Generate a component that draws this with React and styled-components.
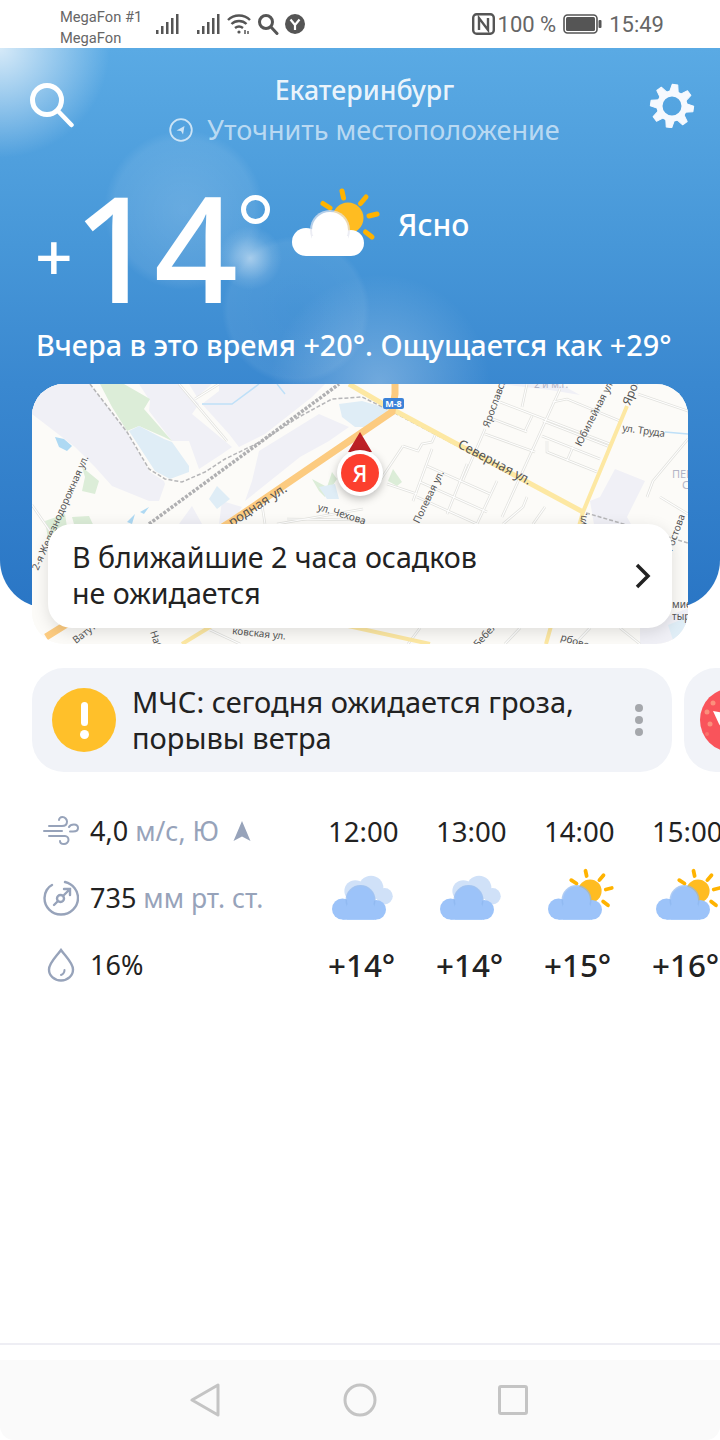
import styled, { createGlobalStyle } from 'styled-components'

const GlobalStyle = createGlobalStyle`
	html,
	body {
		margin: 0;
		padding: 0;
		background: #fff;
	}
	body {
		font-family: 'Noto Sans', 'Open Sans', sans-serif;
	}
	* {
		box-sizing: border-box;
	}
`

const streets = [
	'M179 384L227 441',
	'M195 399L219 384',
	'M560 389L502 517',
	'M500 402L610 444',
	'M493 419L527 432',
	'M532 416L525 431',
	'M527 384L522 407',
	'M485 434L535 452',
	'M485 429L463 480',
	'M543 421L610 447',
	'M542 436L600 459',
	'M547 441V452L597 472',
	'M573 447L567 461',
	'M553 402L567 399L620 421',
	'M638 394L688 411',
	'M688 439L653 481L647 497',
	'M660 497L688 514',
	'M403 446L418 451L422 444L432 442L437 431',
	'M403 446L373 491',
	'M427 466L490 494',
	'M420 482L487 512',
	'M417 497L477 524',
	'M432 449L413 501',
	'M467 464L447 514',
	'M497 481L477 524',
	'M527 497L523 507L503 524',
	'M545 507L533 524',
	'M387 484L417 494',
	'M277 524L363 509',
	'M287 519L364 520',
	'M265 524L262 505',
	'M32 505L70 560',
	'M420 628L408 644',
	'M520 628L505 644',
	'M590 628L575 644',
	'M620 628L640 644',
	'M210 630L240 644',
]

const labels = [
	{ x: 457, y: 447, r: 28, size: 13, text: 'Северная ул.' },
	{ x: 317, y: 510, r: 17, size: 10, text: 'ул. Чехова' },
	{ x: 419, y: 524, r: -64, size: 10, text: 'Полевая ул.' },
	{ x: 489, y: 428, r: -70, size: 10, text: 'Ярославская' },
	{ x: 581, y: 447, r: -63, size: 10, text: 'Юбилейная ул.' },
	{ x: 622, y: 431, r: 8, size: 10, text: 'ул. Труда' },
	{ x: 630, y: 406, r: -68, size: 12, text: 'Ярославского' },
	{ x: 38, y: 571, r: -66, size: 10, text: '2-я Железнодорожная ул.' },
	{ x: 232, y: 527, r: -33, size: 13, text: 'родная ул.' },
	{ x: 672, y: 478, r: 0, size: 11, text: 'ПЕР', muted: true },
	{ x: 682, y: 489, r: 0, size: 11, text: 'С', muted: true },
	{ x: 534, y: 388, r: 0, size: 10, text: '2 и м.г.', muted: true },
	{ x: 585, y: 526, r: -80, size: 10, text: 'ул.' },
	{ x: 672, y: 552, r: -70, size: 10, text: 'Ростова' },
	{ x: 672, y: 608, r: 0, size: 10, text: 'мие' },
	{ x: 672, y: 620, r: 0, size: 10, text: 'тыр' },
	{ x: 76, y: 644, r: -38, size: 10, text: 'Ватутина' },
	{ x: 150, y: 632, r: 72, size: 10, text: 'Наб' },
	{ x: 232, y: 634, r: 6, size: 10, text: 'ковская ул.' },
	{ x: 478, y: 648, r: -48, size: 10, text: 'Бебеля' },
	{ x: 560, y: 640, r: 18, size: 10, text: 'рбовска' },
]

const hours = [
	{ time: '12:00', temp: '+14°', sunny: false },
	{ time: '13:00', temp: '+14°', sunny: false },
	{ time: '14:00', temp: '+15°', sunny: true },
	{ time: '15:00', temp: '+16°', sunny: true },
]

const SignalIcon = () => (
	<svg width="24" height="22" viewBox="0 0 24 22" fill="#555">
		<rect x="0" y="17" width="2.5" height="4" />
		<rect x="5" y="13" width="2.5" height="8" />
		<rect x="10" y="9" width="2.5" height="12" />
		<rect x="15" y="5" width="2.5" height="16" />
		<rect x="20" y="1" width="2.5" height="20" />
	</svg>
)

const WifiIcon = () => (
	<svg width="24" height="22" viewBox="0 0 24 22" fill="none" stroke="#555" strokeWidth="2.4">
		<path d="M1 7c6-6 16-6 22 0" />
		<path d="M4.5 11c4-4 11-4 15 0" />
		<path d="M8 15c2.500-2 5.500-2 8 0" />
		<circle cx="12" cy="19" r="1.600" fill="#555" stroke="none" />
		<path d="M18 17v4M21 18v3" strokeWidth="1.500" />
	</svg>
)

const SmallSearchIcon = () => (
	<svg width="22" height="22" viewBox="0 0 22 22" fill="none" stroke="#555" strokeWidth="3">
		<circle cx="9" cy="9" r="6.500" />
		<path d="M14 14l6 6.500" strokeLinecap="round" />
	</svg>
)

const BrowserIcon = () => (
	<svg width="20" height="20" viewBox="0 0 20 20">
		<circle cx="10" cy="10" r="10" fill="#555" />
		<path d="M5.500 5.500L10 11l4.500-5.500M10 11v5" fill="none" stroke="#fff" strokeWidth="2.200" />
	</svg>
)

const NfcIcon = () => (
	<svg width="23" height="22" viewBox="0 0 23 22" fill="none" stroke="#555">
		<rect x="1.200" y="1.200" width="20.600" height="19.600" rx="3.500" strokeWidth="2.400" />
		<path d="M7 17V5l9 12V5" strokeWidth="2.400" />
	</svg>
)

const BatteryIcon = () => (
	<svg width="39" height="20" viewBox="0 0 39 20">
		<rect x="1" y="1" width="33" height="18" rx="3.500" fill="none" stroke="#555" strokeWidth="1.600" />
		<rect x="3" y="3" width="29" height="14" rx="1.500" fill="#555" />
		<rect x="35.500" y="6" width="3" height="8" rx="1" fill="#555" />
	</svg>
)

const SearchIcon = () => (
	<svg width="46" height="46" viewBox="0 0 46 46" fill="none" stroke="#fff" strokeWidth="5">
		<circle cx="18" cy="18" r="14.500" />
		<path d="M29 29l13.500 14" strokeLinecap="round" strokeWidth="4.500" />
	</svg>
)

const GearIcon = () => (
	<svg width="46" height="46" viewBox="-23 -24 46 46" fill="none" stroke="#f6f9fe">
		<circle r="12.500" strokeWidth="6" />
		{[0, 45, 90, 135, 180, 225, 270, 315].map(angle => (
			<path key={angle} d="M-4.500-13L-2.800-21.500H2.800L4.500-13z" fill="#f6f9fe" strokeWidth="1" strokeLinejoin="round" transform={`rotate(${angle + 8})`} />
		))}
	</svg>
)

const LocateIcon = () => (
	<svg width="24" height="24" viewBox="0 0 24 24" fill="none" stroke="rgba(255,255,255,.7)" strokeWidth="1.800">
		<circle cx="12" cy="12" r="10.800" />
		<path d="M7.500 12.500L15.500 8l-1.500 8.500-2-3.500z" fill="rgba(255,255,255,.7)" stroke="none" />
	</svg>
)

const WeatherIcon = ({ sunny, white, scale = 1 }) => {
	const cloud = white ? '#fff' : '#9cc3f9'
	const shade = white ? '#e4e6f0' : '#8db6ef'
	return (
		<svg width={90 * scale} height={72 * scale} viewBox="0 0 90 72">
			{sunny && (
				<g>
					<circle cx="56" cy="32" r="15.500" fill="#ffbc21" />
					<g stroke="#ffb300" strokeWidth="5" strokeLinecap="round">
						<path d="M50 5l1.500 7" />
						<path d="M74 11l-5.500 6.500" />
						<path d="M85 28l-8 2" />
						<path d="M80 51l-6.500-5" />
						<path d="M38 22l-7-4.500" />
					</g>
				</g>
			)}
			{!sunny && (
				<g fill="#d0e1f8">
					<circle cx="52" cy="28" r="16.500" />
					<circle cx="31" cy="32" r="14.500" />
					<circle cx="70" cy="39" r="11" />
				</g>
			)}
			<circle cx="14" cy="56" r="14" fill={cloud} />
			<circle cx="59" cy="57" r="13" fill={cloud} />
			<rect x="14" y="50" width="45" height="20" fill={cloud} />
			<circle cx="38" cy="44" r="20" fill={shade} opacity=".7" />
			<rect x="14" y="64" width="45" height="6" fill={cloud} />
			<circle cx="38" cy="44" r="18" fill={cloud} />
			<rect x="20" y="50" width="36" height="20" fill={cloud} />
		</svg>
	)
}

const WindIcon = () => (
	<svg width="36" height="30" viewBox="0 0 36 30" fill="none" stroke="#97a3ba" strokeWidth="2" strokeLinecap="round">
		<path d="M1 15h18" />
		<path d="M6 10h13c4 0 5-2.500 5-4.500S22 1 19.500 1 16 3 16 4" />
		<path d="M6 20h16c2 0 3.500 2 3.500 4s-2 4-4.500 4-4-1.500-4-3" />
		<path d="M26 11c1-2 2.500-2.500 5-2.500 3 0 4 1.500 4 3.500s-2 3.500-5 3.500h-3" />
	</svg>
)

const GaugeIcon = () => (
	<svg width="36" height="36" viewBox="0 0 36 36" fill="none" stroke="#97a3ba" strokeWidth="2.400" strokeLinecap="round">
		<path d="M22 2c8 2 13 8.500 13 16 0 9-7.500 16.500-17 16.500S1.500 27 1.500 18C1.500 12 5 7 9 5" />
		<circle cx="17.500" cy="18.500" r="3.500" />
		<path d="M20.500 15.500L27 9M21 9h6v6M14.500 21.500L11 25" />
	</svg>
)

const DropIcon = () => (
	<svg width="28" height="34" viewBox="0 0 28 34" fill="none" stroke="#97a3ba" strokeWidth="2.400" strokeLinecap="round">
		<path d="M14 2C9 9 2 15 2 21.500 2 28 7.500 32.500 14 32.500S26 28 26 21.500C26 15 19 9 14 2z" />
		<path d="M17.500 22c0 2.500-1 4-3.500 5" strokeWidth="2" />
	</svg>
)

const ArrowUpIcon = () => (
	<svg width="18" height="20" viewBox="0 0 18 20">
		<path d="M9 0l8.500 20L9 15.500.5 20z" fill="#97a3ba" />
	</svg>
)

const CityMap = () => (
	<MapDrawing viewBox="32 384 656 260">
		<rect x="32" y="384" width="656" height="260" fill="#fcfbf8" />
		{/* промзоны */}
		<g fill="#f0f0f6">
			<path d="M32 414V384H90L127 432L150 472L164 481L165 484L159 501L149 501L112 486L95 467L75 447z" />
			<path d="M139 384H179L199 404L192 414L232 447L222 454L199 469L189 441L172 441L149 411L150 401z" />
			<path d="M189 384H212L197 397z" />
			<path d="M219 384H325L312 397L265 434L239 447L229 434L202 404L219 391z" />
			<path d="M319 414L349 427L329 441L300 457L245 501L252 481L259 451z" />
			<path d="M222 501L242 507L235 517L219 524z" />
			<path d="M179 524L192 506L202 524z" />
			<path d="M615 469L645 481L627 517L640 540L600 560L590 501L600 497z" />
			<path d="M640 628L688 608V644H640z" />
			<path d="M500 384H560L580 395L550 390z" />
		</g>
		<g fill="#dcedd8">
			<path d="M100 384H124L150 399L144 409L172 441L164 437L139 426L127 431L112 407z" />
			<path d="M82 467L99 481L95 494L82 491L85 477z" />
			<path d="M45 521L65 514L69 540L50 550z" />
			<path d="M72 517L89 516L110 560L80 545z" />
			<path d="M312 479L327 487L332 472L337 479L325 497L319 491z" />
			<path d="M393 469L402 482L397 486L388 481z" />
		</g>
		<g fill="#dfedf6">
			<path d="M129 431L139 426L164 439L172 442L189 466L189 472L170 479L155 471z" />
			<path d="M339 404L362 401L383 407L390 412L370 427L355 427L342 417z" />
			<path d="M209 499L217 486L230 499L217 509z" />
			<path d="M319 487L335 484L339 499L327 499z" />
			<path d="M668 625L688 617V637L674 643z" />
		</g>
		<g fill="#aed9f3">
			<path d="M55 437L64 439L72 446L67 451L59 447z" />
			<path d="M140 512L149 507L144 514z" />
			<path d="M127 522L135 514L132 524z" />
		</g>
		<path d="M202 404H232L259 384M277 384L285 394M665 432L688 434" fill="none" stroke="#bfe0f8" strokeWidth="1.500" />
		<g fill="none" stroke="#e2e2de" strokeWidth="2.600">
			{streets.map(d => (
				<path key={d} d={d} />
			))}
		</g>
		<g fill="none" stroke="#fff" strokeWidth="1.100">
			{streets.map(d => (
				<path key={d} d={d} />
			))}
		</g>
		<path
			d="M90 384L127 432L149 469L165 479L182 482L205 472L225 459L262 441L299 417L332 399L362 397L393 412L583 512L688 543"
			fill="none"
			stroke="#b6b6b8"
			strokeWidth="1.500"
			strokeDasharray="4 2"
		/>
		<path d="M149 524L262 441L339 384" fill="none" stroke="#b0b0b2" strokeWidth="3.500" strokeDasharray="3 1.500" />
		<path d="M349 384L390 408L583 512" fill="none" stroke="#fde8a3" strokeWidth="5" />
		<path d="M627 406L583 512L546 644" fill="none" stroke="#fde8a3" strokeWidth="4" />
		<path d="M395 384V394L392 412L232 521L46 637" fill="none" stroke="#fccb80" strokeWidth="7" />
		<path d="M182 644L218 622M330 622L430 644" fill="none" stroke="#fde8a3" strokeWidth="4" />
		{labels.map(item => (
			<MapLabel
				key={item.text}
				$muted={item.muted}
				$size={item.size}
				x={item.x}
				y={item.y}
				transform={`rotate(${item.r} ${item.x} ${item.y})`}
			>
				{item.text}
			</MapLabel>
		))}
		<rect x="383" y="398" width="21" height="11" rx="2" fill="#3b82d8" />
		<RoadSign x="393.500" y="407">М-8</RoadSign>
	</MapDrawing>
)

function App() {
	return (
		<Page>
			<GlobalStyle />
			<StatusBar>
				<StatusLeft>
					<Carriers>
						<span>MegaFon #1</span>
						<span>MegaFon</span>
					</Carriers>
					<SignalIcon />
					<Spacer />
					<SignalIcon />
					<WifiIcon />
					<SmallSearchIcon />
					<BrowserIcon />
				</StatusLeft>
				<StatusRight>
					<NfcIcon />
					<Percent>100 %</Percent>
					<BatteryIcon />
					<span>15:49</span>
				</StatusRight>
			</StatusBar>

			<Hero>
				<TopRow>
					<SearchIcon />
					<Place>
						<City>Екатеринбург</City>
						<Locate>
							<LocateIcon />
							Уточнить местоположение
						</Locate>
					</Place>
					<GearIcon />
				</TopRow>

				<NowRow>
					<Sign>+</Sign>
					<Degrees>14</Degrees>
					<DegreeMark />
					<NowIcon>
						<WeatherIcon sunny white />
					</NowIcon>
					<Condition>Ясно</Condition>
				</NowRow>

				<Yesterday>Вчера в это время +20°. Ощущается как +29°</Yesterday>

				<MapCard>
					<CityMap />
					<Pin>
						<PinTip />
						<PinBadge>
							<PinLetter>Я</PinLetter>
						</PinBadge>
					</Pin>
					<RainCard>
						<RainText>
							В ближайшие 2 часа осадков
							<br />
							не ожидается
						</RainText>
						<svg width="18" height="26" viewBox="0 0 18 26" fill="none" stroke="#222" strokeWidth="3.500">
							<path d="M3 2l11 11L3 24" />
						</svg>
					</RainCard>
				</MapCard>
			</Hero>

			<AlertRow>
				<AlertCard>
					<AlertBadge>
						<AlertMark />
						<AlertDot />
					</AlertBadge>
					<AlertText>
						МЧС: сегодня ожидается гроза,
						<br />
						порывы ветра
					</AlertText>
					<MoreDots>
						<i />
						<i />
						<i />
					</MoreDots>
				</AlertCard>
				<NextCard>
					<svg width="64" height="64" viewBox="0 0 64 64">
						<circle cx="32" cy="32" r="32" fill="#f9545b" />
						<g fill="#fb8f7c">
							<circle cx="13" cy="15" r="2.500" />
							<circle cx="7" cy="24" r="2.500" />
							<circle cx="10" cy="36" r="2.500" />
							<circle cx="7" cy="46" r="2" opacity=".5" />
						</g>
						<path d="M13 23l17 3-6 18-5-8z" fill="#fff" />
					</svg>
				</NextCard>
			</AlertRow>

			<Forecast>
				<Details>
					<DetailRow>
						<DetailIcon>
							<WindIcon />
						</DetailIcon>
						<DetailValue>4,0</DetailValue>
						<DetailUnit>м/с, Ю</DetailUnit>
						<WindArrow>
							<ArrowUpIcon />
						</WindArrow>
					</DetailRow>
					<DetailRow>
						<DetailIcon>
							<GaugeIcon />
						</DetailIcon>
						<DetailValue>735</DetailValue>
						<DetailUnit>мм рт. ст.</DetailUnit>
					</DetailRow>
					<DetailRow>
						<DetailIcon>
							<DropIcon />
						</DetailIcon>
						<DetailValue>16%</DetailValue>
					</DetailRow>
				</Details>
				<Hours>
					{hours.map(item => (
						<Hour key={item.time}>
							<HourTime>{item.time}</HourTime>
							<HourIcon>
								<WeatherIcon sunny={item.sunny} scale={0.75} />
							</HourIcon>
							<HourTemp>{item.temp}</HourTemp>
						</Hour>
					))}
				</Hours>
			</Forecast>

			<BottomLine />
			<NavBar>
				<svg width="32" height="34" viewBox="0 0 32 34" fill="none" stroke="#c4c4c4" strokeWidth="3" strokeLinejoin="round">
					<path d="M28 2v30L2 17z" />
				</svg>
				<svg width="34" height="34" viewBox="0 0 34 34" fill="none" stroke="#c4c4c4" strokeWidth="3">
					<circle cx="17" cy="17" r="15" />
				</svg>
				<svg width="30" height="30" viewBox="0 0 30 30" fill="none" stroke="#c4c4c4" strokeWidth="3" strokeLinejoin="round">
					<rect x="1.500" y="1.500" width="27" height="27" rx="1.500" />
				</svg>
			</NavBar>
		</Page>
	)
}

export default App

const Page = styled.div`
	width: 720px;
	height: 1440px;
	display: flex;
	flex-direction: column;
	overflow: hidden;
	background: #fff;
`

const StatusBar = styled.div`
	height: 48px;
	flex: none;
	display: flex;
	align-items: center;
	justify-content: space-between;
	padding: 0 56px 0 60px;
	color: #666;
	font-family: 'Roboto', sans-serif;
`

const StatusLeft = styled.div`
	display: flex;
	align-items: center;
	gap: 6px;
`

const Spacer = styled.span`
	width: 5px;
`

const Carriers = styled.div`
	width: 90px;
	display: flex;
	flex-direction: column;
	gap: 4px;
	font-size: 14.7px;
	line-height: 17px;
	white-space: nowrap;
	margin-top: 8px;
`

const StatusRight = styled.div`
	display: flex;
	align-items: center;
	gap: 7px;
	font-size: 22px;
`

const Percent = styled.span`
	margin-left: -4px;
`

const Hero = styled.section`
	position: relative;
	height: 560px;
	flex: none;
	padding: 0 32px;
	border-radius: 0 0 48px 48px;
	color: #fff;
	background:
		radial-gradient(circle 110px at 0 0, rgba(255, 255, 255, 0.75), rgba(255, 255, 255, 0)),
		radial-gradient(circle 32px at 250px 210px, rgba(255, 255, 255, 0.5), rgba(255, 255, 255, 0.1) 70%, rgba(255, 255, 255, 0)),
		radial-gradient(circle 80px at 184px 162px, rgba(255, 255, 255, 0.16), rgba(255, 255, 255, 0.08) 88%, rgba(255, 255, 255, 0)),
		radial-gradient(circle 74px at 296px 262px, rgba(255, 255, 255, 0.03), rgba(255, 255, 255, 0.06) 92%, rgba(255, 255, 255, 0)),
		radial-gradient(circle 110px at 380px 336px, rgba(255, 255, 255, 0.28), rgba(255, 255, 255, 0)),
		linear-gradient(180deg, #5aaae4 0%, #4797d8 35%, #3a88d0 60%, #2a76c5 100%);
`

const TopRow = styled.div`
	display: grid;
	grid-template-columns: 46px 1fr 46px;
	align-items: start;
	height: 100px;
	padding-top: 34px;
	margin-left: -3px;
	margin-right: -7px;
`

const Place = styled.div`
	display: flex;
	flex-direction: column;
	align-items: center;
	margin-top: -10px;
	padding-left: 5px;
`

const City = styled.div`
	font-size: 26.7px;
	line-height: 36px;
	font-weight: 500;
	color: rgba(255, 255, 255, 0.9);
`

const Locate = styled.div`
	display: flex;
	align-items: center;
	gap: 14px;
	margin-top: 4px;
	font-size: 27px;
	line-height: 36px;
	white-space: nowrap;
	color: rgba(255, 255, 255, 0.62);
`

const NowRow = styled.div`
	position: relative;
	height: 177px;
	display: flex;
	align-items: flex-start;
`

const Sign = styled.div`
	width: 46px;
	margin-left: 3px;
	margin-top: 64px;
	font-size: 66px;
	font-weight: 500;
	line-height: 86px;
`

const Degrees = styled.div`
	width: 165px;
	flex: none;
	margin: 18px 0 0 -8px;
	font-size: 147px;
	font-weight: 500;
	line-height: 160px;
	letter-spacing: -3px;
`

const DegreeMark = styled.div`
	width: 29px;
	height: 29px;
	flex: none;
	margin: 47px 0 0 3px;
	border: 5px solid #fff;
	border-radius: 50%;
`

const NowIcon = styled.div`
	margin: 38px 0 0 22px;
`

const Condition = styled.div`
	margin: 56px 0 0 16px;
	font-size: 30px;
	line-height: 42px;
	font-weight: 500;
`

const Yesterday = styled.div`
	margin: 0 0 0 4px;
	font-size: 28.8px;
	line-height: 40px;
	font-weight: 500;
	white-space: nowrap;
`

const MapCard = styled.div`
	position: relative;
	height: 260px;
	margin-top: 19px;
	border-radius: 32px;
	overflow: hidden;
	background: #fcfbf8;
`

const MapDrawing = styled.svg`
	display: block;
	width: 656px;
	height: 260px;
`

const MapLabel = styled.text`
	font-family: 'Noto Sans', sans-serif;
	font-size: ${({ $size }) => $size}px;
	fill: ${({ $muted }) => ($muted ? '#b3b5c6' : '#555')};
`

const RoadSign = styled.text`
	font-family: 'Noto Sans', sans-serif;
	font-size: 9px;
	font-weight: 700;
	fill: #fff;
	text-anchor: middle;
`

const Pin = styled.div`
	position: absolute;
	left: 305px;
	top: 48px;
	width: 46px;
	display: flex;
	flex-direction: column;
	align-items: center;
`

const PinTip = styled.div`
	width: 0;
	height: 0;
	border-left: 12px solid transparent;
	border-right: 12px solid transparent;
	border-bottom: 20px solid #bd2025;
`

const PinBadge = styled.div`
	width: 46px;
	height: 46px;
	margin-top: -2px;
	display: flex;
	align-items: center;
	justify-content: center;
	border-radius: 50%;
	background: #fff;
	box-shadow: 0 3px 8px rgba(0, 0, 0, 0.25);
`

const PinLetter = styled.div`
	width: 38px;
	height: 38px;
	display: flex;
	align-items: center;
	justify-content: center;
	border-radius: 50%;
	background: #fc3f2e;
	color: #fff;
	font-size: 23px;
	font-weight: 500;
`

const RainCard = styled.div`
	position: absolute;
	left: 16px;
	right: 16px;
	top: 140px;
	height: 104px;
	display: flex;
	align-items: center;
	justify-content: space-between;
	padding: 0 20px 0 24px;
	border-radius: 24px;
	background: #fff;
	box-shadow: 0 4px 16px rgba(0, 0, 0, 0.12);
`

const RainText = styled.div`
	margin-top: -2px;
	font-size: 28.6px;
	line-height: 36px;
	color: #222;
	white-space: nowrap;
`

const AlertRow = styled.div`
	display: flex;
	gap: 12px;
	margin-top: 60px;
	padding-left: 32px;
	flex: none;
`

const AlertCard = styled.div`
	width: 640px;
	height: 104px;
	flex: none;
	display: flex;
	align-items: center;
	padding: 0 20px;
	border-radius: 32px;
	background: #f1f3f8;
`

const AlertBadge = styled.div`
	width: 64px;
	height: 64px;
	flex: none;
	display: flex;
	flex-direction: column;
	align-items: center;
	justify-content: center;
	gap: 4px;
	border-radius: 50%;
	background: #ffc02a;
`

const AlertMark = styled.div`
	width: 7px;
	height: 24px;
	border-radius: 4px;
	background: #fff;
`

const AlertDot = styled.div`
	width: 9px;
	height: 9px;
	border-radius: 50%;
	background: #fff;
`

const AlertText = styled.div`
	flex: 1;
	margin: 0 0 0 16px;
	font-size: 29px;
	line-height: 36px;
	color: #222;
	white-space: nowrap;
`

const MoreDots = styled.div`
	display: flex;
	flex-direction: column;
	gap: 4px;
	margin-right: 9px;

	i {
		display: block;
		width: 8px;
		height: 8px;
		border-radius: 50%;
		background: #a5a7ac;
	}
`

const NextCard = styled.div`
	width: 100px;
	height: 104px;
	flex: none;
	display: flex;
	align-items: center;
	padding-left: 16px;
	border-radius: 32px;
	background: #f1f3f8;
`

const Forecast = styled.div`
	display: flex;
	flex: none;
	margin-top: 25px;
	padding-left: 40px;
`

const Details = styled.div`
	width: 288px;
	flex: none;
`

const DetailRow = styled.div`
	height: 67px;
	display: flex;
	align-items: center;
	font-size: 27px;
`

const DetailIcon = styled.div`
	width: 50px;
	flex: none;
	display: flex;
	justify-content: center;
	padding-right: 12px;
	margin-left: 2px;
`

const DetailValue = styled.span`
	margin-left: -2px;
	color: #222;
`

const DetailUnit = styled.span`
	margin-left: 7px;
	font-size: 26.5px;
	color: #97a3ba;
`

const WindArrow = styled.span`
	display: flex;
	margin-left: 14px;
`

const Hours = styled.div`
	display: grid;
	grid-template-columns: repeat(4, 108px);
	flex: none;
`

const Hour = styled.div`
	display: grid;
	grid-template-rows: repeat(3, 67px);
	align-items: center;
`

const HourTime = styled.div`
	font-size: 27.6px;
	color: #222;
`

const HourIcon = styled.div`
	display: flex;
	margin: -8px 0 0 4px;
`

const HourTemp = styled.div`
	font-size: 31.4px;
	font-weight: 500;
	color: #222;
`

const BottomLine = styled.div`
	height: 2px;
	flex: none;
	margin-top: auto;
	margin-bottom: 15px;
	background: #eeeef4;
`

const NavBar = styled.nav`
	height: 80px;
	flex: none;
	display: grid;
	grid-template-columns: 154px 154px 152px;
	align-items: center;
	justify-items: center;
	justify-content: start;
	padding-left: 129px;
	background: #fafafa;
	border-radius: 0 0 14px 14px;
`
